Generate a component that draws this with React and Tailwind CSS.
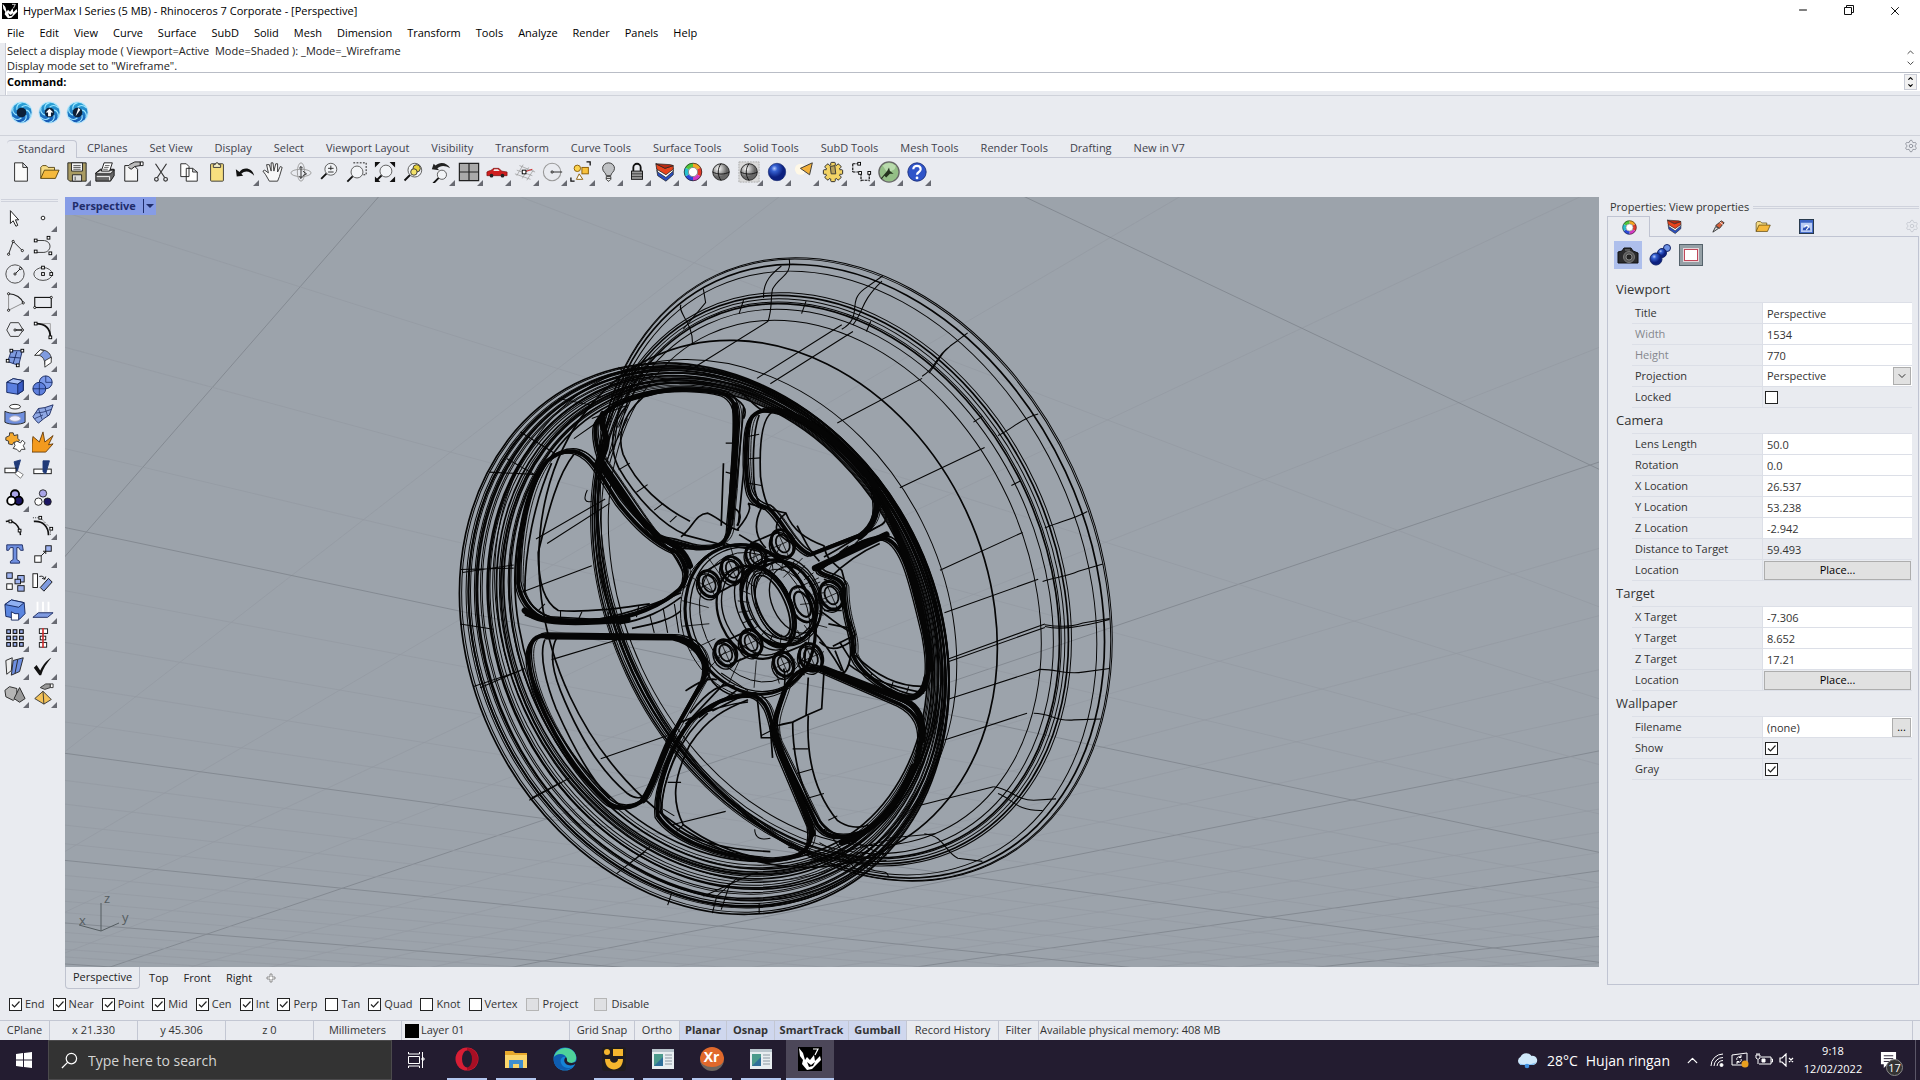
import { ChevronDown, ChevronUp, Minus, Settings, X } from 'lucide-react';

const MENUS = ['File', 'Edit', 'View', 'Curve', 'Surface', 'SubD', 'Solid', 'Mesh', 'Dimension', 'Transform', 'Tools', 'Analyze', 'Render', 'Panels', 'Help'];

const TABS = ['Standard', 'CPlanes', 'Set View', 'Display', 'Select', 'Viewport Layout', 'Visibility', 'Transform', 'Curve Tools', 'Surface Tools', 'Solid Tools', 'SubD Tools', 'Mesh Tools', 'Render Tools', 'Drafting', 'New in V7'];

// icon name, followed by * when the button has a flyout
const TOOLBAR = ['new', 'open', 'save*', 'print', 'props', 'cut', 'copy', 'paste', 'undo*', 'pan', 'rotate', 'zoom', 'zoomWindow', 'zoomExtents', 'zoomSelected', 'undoView*', 'fourView*', 'car*', 'cplane*', 'radius*', 'shapes*', 'bulb*', 'lock*', 'layers*', 'colorWheel*', 'sphere', 'sphereBox*', 'blueSphere*', 'spot*', 'gear*', 'dimension*', 'grasshopper*', 'help*'];

const SIDEBAR = ['pointer', 'point*', 'polyline*', 'curve*', 'circle*', 'ellipse*', 'arc*', 'rectangle*', 'polygon*', 'fillet*', 'patch*', 'sweep*', 'box*', 'spheres*', 'pipe*', 'surface*', 'puzzle', 'explode', 'trim', 'split', 'group*', 'ungroup', 'editCurve', 'offset*', 'text', 'move*', 'copyObj', 'rotateObj', 'boolean*', 'project*', 'array*', 'align*', 'bend*', 'check*', 'solids*', 'drag*'];

const OSNAPS = [
  ['End', true], ['Near', true], ['Point', true], ['Mid', true], ['Cen', true], ['Int', true], ['Perp', true],
  ['Tan', false], ['Quad', true], ['Knot', false], ['Vertex', false],
];

const SECTIONS = [
  {
    title: 'Viewport',
    rows: [
      { label: 'Title', value: 'Perspective' },
      { label: 'Width', value: '1534', muted: true },
      { label: 'Height', value: '770', muted: true },
      { label: 'Projection', value: 'Perspective', type: 'select' },
      { label: 'Locked', type: 'check', checked: false },
    ],
  },
  {
    title: 'Camera',
    rows: [
      { label: 'Lens Length', value: '50.0' },
      { label: 'Rotation', value: '0.0' },
      { label: 'X Location', value: '26.537' },
      { label: 'Y Location', value: '53.238' },
      { label: 'Z Location', value: '-2.942' },
      { label: 'Distance to Target', value: '59.493', readOnly: true },
      { label: 'Location', type: 'button' },
    ],
  },
  {
    title: 'Target',
    rows: [
      { label: 'X Target', value: '-7.306' },
      { label: 'Y Target', value: '8.652' },
      { label: 'Z Target', value: '17.21' },
      { label: 'Location', type: 'button' },
    ],
  },
  {
    title: 'Wallpaper',
    rows: [
      { label: 'Filename', value: '(none)', type: 'file' },
      { label: 'Show', type: 'check', checked: true },
      { label: 'Gray', type: 'check', checked: true },
    ],
  },
];

const sq = (x, y, s = 3) => <rect x={x - s / 2} y={y - s / 2} width={s} height={s} fill="#fff" stroke="#000" strokeWidth="1" />;
const dot = (x, y) => <circle cx={x} cy={y} r="1.2" fill="#fff" stroke="#000" strokeWidth=".9" />;
const lens = (x, y, r) => (
  <>
    <path d={`M${x - r * 0.7} ${y + r * 0.7}L${x - r * 0.7 - 6} ${y + r * 0.7 + 6}`} stroke="#111" strokeWidth="2" />
    <circle cx={x} cy={y} r={r} fill="#f2f4f7" stroke="#555" />
  </>
);

const colorWheel = (
  <g fill="none" strokeWidth="4.5">
    <path d="M12 4.5A7.5 7.5 0 0 1 18.5 8.2" stroke="#f5a623" />
    <path d="M18.5 8.2A7.5 7.5 0 0 1 18.5 15.8" stroke="#e23a2a" />
    <path d="M18.5 15.8A7.5 7.5 0 0 1 12 19.5" stroke="#d43ac2" />
    <path d="M12 19.5A7.5 7.5 0 0 1 5.5 15.8" stroke="#2b49d8" />
    <path d="M5.5 15.8A7.5 7.5 0 0 1 5.5 8.2" stroke="#28c1d0" />
    <path d="M5.5 8.2A7.5 7.5 0 0 1 12 4.5" stroke="#4fc63b" />
    <circle cx="12" cy="12" r="9.6" stroke="#222" strokeWidth=".8" />
    <circle cx="12" cy="12" r="5" stroke="#444" strokeWidth=".6" fill="#fff" />
  </g>
);

const layers = (
  <g stroke="#222" strokeWidth=".8" strokeLinejoin="round">
    <path d="M3 10L13 16L21 10V15L13 22L4 16Z" fill="#2a4fc0" />
    <path d="M3 8L13 14L21 8V11L13 18L4 12Z" fill="#fff" />
    <path d="M2 3L12 8L21 5V9L13 15L3 9Z" fill="#e8441d" />
    <path d="M2 3L12 8L21 5L18 4Z" fill="#b92a12" />
  </g>
);

const folder = (
  <g stroke="#4a3500" strokeWidth=".9" strokeLinejoin="round">
    <path d="M3 19V7L5 5H9L11 7H18V10" fill="#f6dc85" />
    <path d="M3 19L7 10H23L19 19Z" fill="#f5b93c" />
  </g>
);

const TEETH = [0, 45, 90, 135, 180, 225, 270, 315];

const goldGear = (
  <g>
    {TEETH.map((angle) => (
      <rect key={angle} x="9.500" y="1.500" width="5" height="6" rx="1" transform={`rotate(${angle} 12 12)`} fill="#f2d365" stroke="#222" />
    ))}
    <circle cx="12" cy="12" r="7.600" fill="#f2d365" />
    <path d="M9 6L14 5L15 14H10Z" fill="#b8a25a" stroke="#333" />
  </g>
);

const ICONS = {
  new: <path d="M5 2H14L19 7V22H5ZM14 2V7H19" fill="#fafafa" stroke="#222" />,
  open: folder,
  save: (
    <g stroke="#222">
      <path d="M2 2H22V22H4L2 20Z" fill="#a99b62" />
      <path d="M6 2H18V11H6Z" fill="#f4f4f4" />
      <path d="M7 15H17V22H7Z" fill="#ddd" />
      <path d="M10 17V21M8 5H16M8 7H16M8 9H16" strokeWidth=".8" />
    </g>
  ),
  print: (
    <g stroke="#111" strokeLinejoin="round">
      <path d="M2 13L7 9H22L22 16L18 22H2Z" fill="#666" />
      <path d="M2 13L7 10H22L18 14H2Z" fill="#d8d8d8" />
      <path d="M8 11L11 2H20L17 11Z" fill="#fff" />
      <path d="M12 5H17M11 7H16M10 9H15" strokeWidth=".7" />
      <path d="M3 17H17V21" fill="none" stroke="#fff" />
    </g>
  ),
  props: (
    <g stroke="#111">
      <path d="M3 5H13L17 9V22H3Z" fill="#f5f5f5" />
      <path d="M8 4L14 1H20V5L14 6L10 9L7 7" fill="#bbb" />
      <path d="M20 1H23V5H20Z" fill="#fff" />
    </g>
  ),
  cut: (
    <g fill="none" stroke="#333" strokeWidth="1.3">
      <path d="M6 3L16 18M18 3L8 18" />
      <circle cx="7" cy="20" r="2" />
      <circle cx="17" cy="20" r="2" />
    </g>
  ),
  copy: <path d="M3 3H9L12 6V17H3ZM9 8H16L21 12V22H9ZM16 8V12H21" fill="#fff" stroke="#222" />,
  paste: (
    <g stroke="#333">
      <rect x="5" y="3" width="14" height="19" rx="1" fill="#f7df7f" />
      <path d="M8 7V4H10L11 2H13L14 4H16V7Z" fill="#f5efc8" />
    </g>
  ),
  undo: <path d="M2 9L3 17L10 16L8 14C13 9 18 12 22 16C20 7 10 6 6 12Z" fill="#111" />,
  pan: <path d="M8 22L4 15L1 11L3 10L7 13L5 4H8L10 11V2H12L13 11L15 3H17L17 12L20 6L22 7L19 17L17 22Z" fill="#f7f7f7" stroke="#333" strokeLinejoin="round" />,
  rotate: (
    <g fill="none" stroke="#999">
      <ellipse cx="12" cy="13" rx="11" ry="4" />
      <ellipse cx="12" cy="12" rx="4" ry="10" />
      <path d="M12 6V19M10 8L12 6L14 8M10 17L12 19L14 17M14 11L18 14L14 16" stroke="#222" />
    </g>
  ),
  zoom: <>{lens(14, 9, 6.5)}<path d="M14 5V10M11 8H17M11 12H17" stroke="#222" /></>,
  zoomWindow: <>{lens(12, 12, 6.5)}<path d="M8 2H22V15H18" fill="none" stroke="#111" strokeDasharray="2 1.5" /></>,
  zoomExtents: <>{lens(13, 11, 6.5)}<path d="M1 1H7L1 7ZM23 1H17L23 7ZM1 23V17L7 23ZM23 23V17L17 23Z" fill="#111" /></>,
  zoomSelected: <>{lens(14, 10, 7.5)}<circle cx="16" cy="8" r="4" fill="#e8d23a" stroke="#333" /><circle cx="13" cy="12" r="3.5" fill="#f3e26a" stroke="#333" /></>,
  undoView: <>{lens(13, 15, 5)}<path d="M2 9L4 3L6 5C11 0 19 2 22 8C16 4 11 5 8 8L10 10Z" fill="#222" /></>,
  fourView: <path d="M1.500 2.500H22.500V21.500H1.500ZM12 2.500V21.500M1.500 12H22.500" fill="#aaa" stroke="#222" strokeWidth="1.300" />,
  car: (
    <g>
      <path d="M1 12C4 10 6 11 8 8H14L17 11L23 12V16H1Z" fill="#cf1f1f" stroke="#701010" strokeWidth=".7" />
      <path d="M9 9H13L15 11H8Z" fill="#eee" />
      <circle cx="6" cy="16" r="2" fill="#222" />
      <circle cx="18" cy="16" r="2" fill="#222" />
    </g>
  ),
  cplane: (
    <g fill="none" stroke="#999" strokeWidth=".8">
      <path d="M6 5L23 12M3 10L20 16M1 14L18 20M10 4L3 16M16 7L9 19M21 10L14 21" />
      <path d="M11 12L20 9" stroke="#c33" strokeWidth="1.2" />
      {sq(11, 12, 4)}
    </g>
  ),
  radius: <><circle cx="11" cy="12" r="9.5" fill="none" stroke="#999" strokeWidth="1.2" />{dot(11, 12)}<path d="M12 12H22" stroke="#222" /></>,
  shapes: (
    <g stroke="#8a5a00">
      <circle cx="8" cy="8" r="3.500" fill="#fbd34d" />
      <rect x="13" y="7" width="7" height="7" fill="#f9c23c" />
      <path d="M10 14L14 20H7Z" fill="#fff" />
      <path d="M18 1H22V5M1 18V22H5" fill="none" stroke="#111" strokeWidth="1.4" />
    </g>
  ),
  bulb: (
    <g stroke="#333">
      <path d="M9 16C9 13 5 12 5 8A6.500 6 0 0 1 18 8C18 12 14 13 14 16Z" fill="#bfc1c4" />
      <path d="M9 17H14V20L12 22H11L9 20ZM9 19H14" fill="#eee" />
    </g>
  ),
  lock: (
    <g stroke="#111">
      <path d="M8 11V7A4 4 0 0 1 16 7V11" fill="none" strokeWidth="2" />
      <rect x="6" y="11" width="12" height="9" fill="#999" />
      <path d="M6 14H18M6 17H18" strokeWidth=".7" />
    </g>
  ),
  layers,
  colorWheel,
  sphere: <><circle cx="12" cy="12" r="9" fill="url(#steel)" stroke="#222" /><path d="M12 3C8 8 8 16 12 21M3 12C8 15 16 15 21 12" fill="none" stroke="#111" /></>,
  sphereBox: <><rect x="1" y="1" width="22" height="22" fill="#d9d9d9" stroke="#aaa" strokeDasharray="2 1" /><circle cx="12" cy="12" r="9" fill="url(#steel)" stroke="#222" /><path d="M12 3C8 8 8 16 12 21M3 12C8 15 16 15 21 12" fill="none" stroke="#111" /></>,
  blueSphere: <circle cx="12" cy="12" r="9.500" fill="url(#royal)" stroke="#12266e" strokeWidth=".7" />,
  spot: <><circle cx="7" cy="9" r="6" fill="#fff8e6" /><path d="M7 8L20 2L17 15Z" fill="#f3b13b" stroke="#333" /></>,
  gear: goldGear,
  dimension: <g stroke="#111"><path d="M3 3V12M3 3H9M3 12H9M12 13V22M21 13V22M12 21H21" fill="none" strokeDasharray="3 1" strokeWidth="1.300" />{sq(10, 3)}{sq(11, 13)}{sq(21, 13)}</g>,
  grasshopper: (
    <g>
      <circle cx="12" cy="12" r="11" fill="#94bf86" stroke="#666" strokeWidth="1.5" />
      <path d="M5 5A10 10 0 0 1 19 5C20 9 15 12 9 11Z" fill="#b9dbad" />
      <path d="M3 19L10 11L12 7L13 11L17 14L13 14L9 18L7 16L4 20Z" fill="#26331f" />
    </g>
  ),
  help: (
    <g>
      <circle cx="12" cy="12" r="10" fill="#2f54c9" stroke="#1b2f7c" />
      <path d="M8 9C8 4 16 4 16 9C16 12 12 12 12 15" fill="none" stroke="#fff" strokeWidth="2.4" />
      <circle cx="12" cy="18.500" r="1.500" fill="#fff" />
    </g>
  ),
  pointer: <path d="M7 4V18L10 15L13 21L15 20L12.500 14H16Z" fill="#fff" stroke="#111" />,
  point: <circle cx="12" cy="12" r="2" fill="#fff" stroke="#111" />,
  polyline: <g><path d="M5 21L10 7L20 17" fill="none" stroke="#222" />{dot(5, 21)}{dot(10, 7)}{dot(20, 17)}</g>,
  curve: <g><path d="M4 6H12C22 6 22 18 13 19H4" fill="none" stroke="#333" />{sq(4, 6)}{sq(18, 3)}{sq(4, 18)}{sq(20, 20)}</g>,
  circle: <g><circle cx="12" cy="12" r="10" fill="none" stroke="#444" /><path d="M12 12L18 6" stroke="#111" />{dot(12, 12)}{dot(18, 6)}</g>,
  ellipse: <g><ellipse cx="12" cy="12" rx="10" ry="7" fill="none" stroke="#444" />{sq(12, 5)}{sq(12, 12)}{sq(21, 12)}</g>,
  arc: <g><path d="M5 3C13 3 19 8 21 13" fill="none" stroke="#222" strokeWidth="1.300" /><path d="M5 3V21L21 13" fill="none" stroke="#888" />{dot(5, 3)}{dot(21, 13)}{dot(5, 21)}</g>,
  rectangle: <g><rect x="3" y="7" width="18" height="11" fill="none" stroke="#111" strokeWidth="1.2" />{dot(21, 7)}{dot(3, 18)}</g>,
  polygon: <g><path d="M7 4H16L21 12L16 19H7L3 12Z" fill="none" stroke="#333" /><path d="M12 12H19" stroke="#111" strokeWidth="1.500" />{dot(12, 12)}{dot(20, 12)}</g>,
  fillet: <g><path d="M4 5H20V20" fill="none" stroke="#999" /><path d="M4 5C14 5 20 10 20 20" fill="none" stroke="#111" strokeWidth="2" />{sq(4, 5)}{sq(20, 20)}</g>,
  patch: <g><path d="M8 4H20L16 20L4 16Z" fill="#7f9be0" stroke="#1a2a60" /><path d="M14 5L10 18M6 11L18 12" stroke="#1a2a60" />{sq(8, 4)}{sq(20, 4)}{sq(4, 15)}{sq(15, 20)}</g>,
  sweep: <g stroke="#333"><path d="M3 9L9 3C17 3 21 8 21 13L14 19C14 12 10 8 3 9Z" fill="#7f9be0" /><path d="M3 9L9 3L13 4L8 9ZM14 15L21 11V17L14 22Z" fill="#fff" /></g>,
  box: <g stroke="#12245c" strokeLinejoin="round"><path d="M3 8L10 4L21 6V17L15 21L3 19Z" fill="#5b7fe0" /><path d="M3 8L10 4L21 6L15 10Z" fill="#a9bff5" /><path d="M15 10V21L21 17V6Z" fill="#3a5bc4" /></g>,
  spheres: <g stroke="#12245c"><circle cx="15" cy="8" r="7" fill="#7c9aea" /><circle cx="8" cy="15" r="7" fill="#5f80dd" /><path d="M8 9V22M1 15H15M15 1V8M15 8H22" strokeWidth=".8" /></g>,
  pipe: <g stroke="#222"><ellipse cx="12" cy="4" rx="6" ry="2.500" fill="#fff" /><path d="M1 9C6 12 18 12 23 9V21C18 24 6 24 1 21Z" fill="#6f8fdf" /><ellipse cx="12" cy="17" rx="6" ry="3" fill="#eef" stroke="#aab" /></g>,
  surface: <g stroke="#1a2a60"><path d="M1 15L7 6L14 5L23 2L19 13L13 17L7 22L4 19Z" fill="#8fa8e4" /><path d="M7 6L11 18M14 5L17 14M4 11L12 10L21 7M3 17L12 13" strokeWidth=".8" fill="none" /></g>,
  puzzle: (
    <g stroke="#333">
      <path d="M2 7L6 5L6 2L10 2L11 5L15 4L15 8L17 10L14 13L11 12L9 15L5 14L5 11L2 10Z" fill="#f5a92e" />
      <path d="M11 13L14 11L18 13L20 10L23 13L21 16L23 20L19 20L17 23L14 20L10 19L12 16Z" fill="#fff" />
    </g>
  ),
  explode: <path d="M0 23V15L1 6L8 12L12 1L14 12L23 5L18 15L23 14L15 23Z" fill="#f39a1e" stroke="#5a3000" strokeWidth=".9" />,
  trim: <g stroke="#111"><path d="M11 3L18 1L14 15Z" fill="#203a78" stroke="#203a78" /><rect x="1" y="10" width="12" height="5" fill="#fff" /><path d="M15 13L21 17L18 21L12 16Z" fill="#fff" stroke="#777" /></g>,
  split: <g stroke="#111"><rect x="2" y="11" width="19" height="5" fill="#fff" /><path d="M12 2H19L15 16L12 14Z" fill="#203a78" stroke="#203a78" /></g>,
  group: <g stroke="#000" strokeWidth="2"><circle cx="12" cy="8" r="4.500" fill="#a9a4e8" /><circle cx="16" cy="15" r="4.500" fill="#1c1663" /><circle cx="8" cy="15" r="4.500" fill="#fff" /></g>,
  ungroup: <g stroke="#222"><circle cx="12" cy="7" r="4" fill="#a9a4e8" /><circle cx="17" cy="16" r="4" fill="#1c1663" /><circle cx="7" cy="16" r="4" fill="#fff" /></g>,
  editCurve: <g><path d="M2 7C10 5 17 11 18 22" fill="none" stroke="#111" strokeWidth="1.600" />{sq(7, 7)}{sq(17, 17)}</g>,
  offset: <g><path d="M2 7C12 6 18 13 18 22" fill="none" stroke="#111" strokeWidth="1.800" /><path d="M1 3H9L20 14V22" fill="none" stroke="#111" strokeDasharray="1 1.500" />{sq(9, 3)}{sq(21, 15)}</g>,
  text: <path d="M3 2H20L21 8H18L16 5H14V18L17 20V22H7V20L10 18V5H7L5 8H3Z" fill="#6f8fe0" stroke="#1a2a60" />,
  move: <g stroke="#111"><rect x="3" y="14" width="7" height="7" fill="#fff" /><rect x="15" y="3" width="6" height="6" fill="#9db2f0" /><path d="M10 14L15 9M12 9H15V12" fill="none" /></g>,
  copyObj: <g stroke="#111"><rect x="3" y="2" width="6" height="6" fill="#9db2f0" /><rect x="15" y="5" width="7" height="7" fill="#9db2f0" /><rect x="12" y="9" width="6" height="5" fill="#9db2f0" /><rect x="3" y="14" width="6" height="6" fill="#fff" /><rect x="15" y="16" width="7" height="6" fill="#9db2f0" /></g>,
  rotateObj: <g stroke="#111"><rect x="1" y="3" width="5" height="15" fill="#fff" /><path d="M9 18L18 8L22 12L13 22Z" fill="#7f9be0" /><path d="M8 6C11 5 13 6 14 9M11 8L14 9L15 6" fill="none" /></g>,
  boolean: <g stroke="#12245c" strokeLinejoin="round"><path d="M1 6L8 1L22 4L23 16L17 22L2 19Z" fill="#5b86e0" /><path d="M1 6L8 1L22 4L16 9Z" fill="#8fb0f2" /><path d="M8 14L12 16H16V23H8Z" fill="#fff" /></g>,
  project: <g><path d="M6 3V14M12 3V14M18 3V14" stroke="#fff" strokeWidth="2" /><path d="M1 20L7 15H23L17 20Z" fill="#7f9be0" stroke="#1a2a60" /></g>,
  array: <g fill="#9db2f0" stroke="#111" strokeWidth="1.200">{[3, 10, 17].map((y) => [3, 10, 17].map((x) => <rect key={`${x}-${y}`} x={x} y={y} width="4" height="4" />))}</g>,
  align: <g stroke="#111"><rect x="8" y="2" width="9" height="5" fill="#fff" /><rect x="9" y="10" width="6" height="4" fill="#fff" /><rect x="8" y="17" width="8" height="5" fill="#fff" /><path d="M12 1V23" stroke="#d03030" strokeWidth="1.800" /></g>,
  bend: <g stroke="#222"><path d="M2 6L9 3L8 17L3 21Z" fill="#eee" /><path d="M10 6L21 3L17 18L8 22Z" fill="#6f8fe0" /><path d="M15 5L12 20" /></g>,
  check: <path d="M2 14L5 11L9 17C12 10 17 5 21 3C16 9 12 15 10 22H8Z" fill="#111" />,
  solids: <g stroke="#222"><path d="M1 8L6 4L14 6V15L10 19L2 15Z" fill="#b5b5b5" /><path d="M17 5L23 17L17 21L11 17Z" fill="#999" /></g>,
  drag: <g stroke="#333"><path d="M12 9L21 18L13 23L3 17Z" fill="#f2c25a" /><path d="M12 9L13 23" /><path d="M9 5L15 1H20V5L14 7Z" fill="#999" /><path d="M20 1H23V5H20Z" fill="#fff" /></g>,
};

function Icon({ name, size = 'h-[22px] w-[22px]' }) {
  return (
    <svg viewBox="0 0 24 24" className={`${size} shrink-0`} aria-hidden="true">
      {ICONS[name]}
    </svg>
  );
}

function ToolButton({ item }) {
  const name = item.replace('*', '');
  return (
    <button type="button" title={name} className="relative flex h-7 w-7 items-center justify-center">
      <Icon name={name} />
      {item.endsWith('*') ? (
        <span className="absolute right-0 bottom-0 border-b-6 border-l-6 border-b-[#686a72] border-l-transparent" />
      ) : null}
    </button>
  );
}

function RhinoMark({ className }) {
  return (
    <svg viewBox="0 0 24 24" className={className} aria-hidden="true">
      <rect width="24" height="24" fill="#000" />
      <path d="M1 1L2 9L5 13L4 17L9 23L14 22L23 13L22 9L17 14L16 8L12 13L9 10L7 13L5 6Z" fill="#fff" />
      <path d="M9 15L13 18L17 15L15 19L11 20Z" fill="#000" />
      <path d="M15 2H20L17 8" fill="none" stroke="#fff" strokeWidth="1.200" />
    </svg>
  );
}

function TitleBar() {
  return (
    <header className="flex h-[22px] items-center bg-white pl-[2px] text-black">
      <RhinoMark className="h-4 w-4" />
      <h1 className="ml-[5px] text-[11px]">HyperMax I Series (5 MB) - Rhinoceros 7 Corporate - [Perspective]</h1>
      <div className="mr-[2px] ml-auto flex">
        <button type="button" aria-label="Minimize" className="flex w-[46px] justify-center"><Minus className="h-3 w-3" strokeWidth={2} /></button>
        <button type="button" aria-label="Restore" className="flex w-[46px] justify-center">
          <svg viewBox="0 0 12 12" className="h-3 w-3" fill="none" stroke="#111">
            <path d="M1.500 3.500H8.500V10.500H1.500ZM3.500 3.500V1.500H10.500V8.500H8.500" />
          </svg>
        </button>
        <button type="button" aria-label="Close" className="flex w-[46px] justify-center"><X className="h-[14px] w-[14px]" strokeWidth={1.6} /></button>
      </div>
    </header>
  );
}

function CommandArea() {
  return (
    <section className="flex h-[52px] bg-white">
      <div className="mr-px w-[6px] border-r border-[#c9ccd6] bg-[#e9ebf0]" />
      <div className="flex flex-1 flex-col">
        <div className="relative flex h-[30px] flex-col border-b border-[#b9bdc6] text-[11px] leading-[15px] text-[#222]">
          <span className="whitespace-pre">Select a display mode ( Viewport=Active  Mode=Shaded ): _Mode=_Wireframe</span>
          <span>Display mode set to "Wireframe".</span>
          <div className="absolute top-0 right-1 flex h-full flex-col justify-between py-1 text-[#333]">
            <ChevronUp className="h-[11px] w-[11px]" />
            <ChevronDown className="h-[11px] w-[11px]" />
          </div>
        </div>
        <div className="flex h-[18px] items-center text-[11px]">
          <label htmlFor="command" className="font-bold text-black">Command:</label>
          <input id="command" className="ml-1 min-w-0 flex-1 outline-none" />
          <div className="mr-[3px] flex flex-col border border-[#c9ccd6] bg-[#f1f1f1] text-black">
            <ChevronUp className="h-[7px] w-[11px]" strokeWidth={4} />
            <ChevronDown className="h-[7px] w-[11px]" strokeWidth={4} />
          </div>
        </div>
        <div className="h-1 bg-[#e9ebf0]" />
      </div>
    </section>
  );
}

function SwirlIcon({ children }) {
  return (
    <svg viewBox="0 0 24 24" className="h-[23px] w-[23px]" aria-hidden="true">
      <circle cx="12" cy="12" r="11.500" fill="#b8e6fb" />
      <circle cx="12" cy="12" r="10.500" fill="url(#swirl)" />
      {[0, 60, 120, 180, 240, 300].map((angle) => (
        <path key={angle} d="M12 6.500C15 4 18 4 21 7" transform={`rotate(${angle} 12 12)`} fill="none" stroke="#9be6ff" strokeWidth="1.200" />
      ))}
      <circle cx="12" cy="12" r="5" fill="#0d2038" />
      {children}
    </svg>
  );
}

function PluginBar() {
  return (
    <div className="flex h-10 items-center gap-[5px] border-t border-[#cfd2da] pb-[6px] pl-[10px]">
      <button type="button" title="Status"><SwirlIcon /></button>
      <button type="button" title="Update"><SwirlIcon><path d="M12 8L16 12H13.500V16H10.500V12H8Z" fill="#fff" /></SwirlIcon></button>
      <button type="button" title="Gauge"><SwirlIcon><path d="M10 16L13 7L15 9Z" fill="#fff" /></SwirlIcon></button>
    </div>
  );
}

function TabBar() {
  return (
    <section className="h-[62px] border-t border-[#cfd2da] pl-[7px]">
      <div className="flex h-[22px] items-end border-b border-[#c3c6d2] text-[11px] text-[#3f424c]">
        {TABS.map((tab, i) => (
          <button
            key={tab}
            type="button"
            className={`h-[18px] px-[11px] whitespace-nowrap ${i === 0 ? 'relative top-px -mr-px rounded-t border-t border-r border-[#c3c6d2] bg-[#e9ebf0]' : ''}`}
          >
            {tab}
          </button>
        ))}
        <Settings className="mr-[2px] mb-1 ml-auto h-[14px] w-[14px] text-[#8c8f99]" strokeWidth={1.5} />
      </div>
      <div className="flex">
        {TOOLBAR.map((item) => <ToolButton key={item} item={item} />)}
      </div>
    </section>
  );
}

// Ground plane seen in two point perspective: every line of a family runs to one vanishing point.
const HORIZON = 964;

function gridFamily(vx, step, first, count, direction) {
  return Array.from({ length: count }, (_, i) => {
    const offset = first + i * step;
    const run = 14;
    return { x1: vx, y1: HORIZON, x2: vx + direction * offset * run, y2: HORIZON - 195 * run, major: i % 5 === 0 };
  });
}

const GRID = [...gridFamily(-527, 81, 170, 60, 1), ...gridFamily(2992, 102, 411, 60, -1)];

const lerp = (a, b, t) => a + (b - a) * t;

function rings(from, to, stops) {
  return stops.map((t) => from.map((v, i) => lerp(v, to[i], t)));
}

// cx, cy, rx, ry, rotation
const RINGS = [
  ...rings([592, 893, 640, 522, 63], [630, 862, 552, 436, 63], [0, 0.04, 0.12, 0.16, 0.2, 0.27, 0.3, 0.38, 0.41, 0.5, 0.55, 0.6, 0.67, 0.72, 0.77, 0.8, 0.88, 0.93, 1]),
  ...rings([927, 738, 728, 541, 65], [915, 746, 706, 518, 65], [0, 0.1, 0.5, 1]),
  ...rings([876, 760, 668, 506, 65], [862, 768, 614, 452, 65], [0, 0.1, 0.22, 0.34, 0.4, 0.6, 1]),
  [735, 815, 610, 490, 65],
  [640, 852, 606, 492, 63],
];

const BOLD_RINGS = [
  [636, 864, 566, 456, 63],
  [630, 866, 576, 470, 63],
  [620, 876, 600, 486, 63],
  [612, 884, 618, 502, 63],
  [602, 888, 628, 512, 63],
];

const WINDOWS = [
  'M470 345C520 330 600 335 635 345C660 355 668 380 665 420L655 560L648 635C650 680 620 692 580 690C540 685 520 670 490 672C470 655 430 590 370 505C350 480 345 430 350 410C365 380 410 358 470 345Z',
  'M740 382C810 385 950 490 972 560C982 610 975 640 940 662L830 705C790 690 770 630 735 600C690 590 688 560 685 500C685 440 688 410 700 395C710 385 725 380 740 382Z',
  'M990 668C1040 668 1060 780 1085 880C1100 960 1095 1005 1062 1025C1010 1022 940 970 925 930C930 880 905 860 905 780C900 750 850 755 848 738C900 700 940 670 990 668Z',
  'M850 962L1030 1040C1070 1060 1080 1090 1075 1130C1065 1220 1010 1290 950 1325C900 1345 865 1340 845 1310L755 1125C740 1080 760 1050 775 1000C800 960 820 955 850 962Z',
  'M700 1020C745 1035 740 1090 760 1150L828 1310C838 1370 810 1385 740 1390C620 1385 520 1340 488 1290C480 1230 520 1130 560 1080C600 1040 650 1020 700 1020Z',
  'M230 886L520 890C580 892 605 940 590 985L520 1110L460 1250C430 1280 390 1275 370 1255C290 1180 210 1040 200 950C195 910 205 890 230 886Z',
  'M300 474C340 480 360 530 400 590C440 640 480 680 530 700C555 730 560 770 525 792C480 830 400 855 330 855L240 850C200 840 180 800 175 770C175 680 190 560 240 495C260 477 280 472 300 474Z',
];

// the stretches where the spoke fillets bunch up into solid black
const HEAVY_EDGES = [
  'M660 370C668 420 655 520 652 620M355 500C400 560 440 620 490 665C530 680 550 700 560 730',
  'M770 385C850 410 950 500 985 570C1040 680 1080 800 1100 960M840 735L1000 660M975 560C985 600 975 640 940 665',
  'M860 960L1040 1030C1070 1045 1085 1070 1080 1120M1090 980C1085 1010 1070 1025 1050 1025',
  'M745 1090C770 1180 810 1250 835 1330M1060 1180C1030 1260 970 1330 900 1350M520 1110C490 1170 480 1220 455 1255',
  'M240 888L520 890C570 900 600 940 595 970M190 830C220 860 300 860 420 850M350 505C400 440 350 420 365 390',
];

const INNER_EDGES = [
  'M455 352C400 400 400 450 410 480C440 550 500 600 560 630M420 370C380 410 380 470 400 510C440 580 500 640 550 660',
  'M745 385C720 400 715 460 718 530C722 560 730 590 740 605M715 392C700 430 700 510 705 560C710 580 715 595 720 600M975 560C1000 600 1010 630 985 640C940 660 900 690 860 710',
  'M985 680C940 700 900 730 870 760M1080 1000C1020 1000 970 970 930 930M1085 1015C1010 1000 950 980 915 950',
  'M825 1065C820 1160 840 1240 890 1300C910 1315 940 1320 960 1310M790 1080C790 1160 810 1240 850 1300C880 1335 900 1340 930 1335',
  'M690 1030C640 1050 600 1070 560 1130C520 1210 520 1260 545 1310C600 1350 660 1375 720 1385M600 1060C540 1110 500 1200 495 1280C530 1340 620 1365 740 1370',
  'M262 890C245 920 250 960 270 1010C310 1110 360 1190 420 1240C440 1255 455 1250 460 1240M235 895C220 930 240 1000 260 1050C300 1140 340 1210 380 1250',
  'M300 480C260 530 240 620 220 700C220 760 230 810 265 830C330 835 400 825 470 815M250 500C210 590 190 700 190 790C200 820 230 845 270 850M350 540C340 640 350 740 380 830C420 960 480 1080 560 1170C640 1260 740 1340 820 1370',
  'M480 660C500 680 520 690 545 745M520 690C560 720 560 750 545 780M190 840C260 870 380 860 540 790M400 860C460 850 500 830 540 800M430 870C480 860 520 850 540 830',
  'M540 665C570 640 570 615 600 612C630 625 650 650 670 650M530 690C580 695 620 690 640 680M545 660L640 685',
  'M690 590C730 600 745 605 775 612C790 650 820 670 860 685C865 710 870 715 900 740L908 770L895 790C900 830 930 870 930 885C920 900 925 950 905 970L860 962M880 910L930 885M870 860L920 870M885 920L905 970M895 900L920 940M860 830L900 830',
  'M860 970L855 1050L820 1065L790 1080L765 1085M825 980L820 1065M770 960C780 1000 760 1050 750 1090M745 1090L790 1080M710 1020L720 1115L745 1115M740 1090L745 1160',
  'M600 970C610 1000 650 1030 690 1020M560 1060C600 1010 630 990 660 1000M540 1080C590 1060 630 1040 690 1035M550 1010C580 990 600 980 620 985M530 1090L600 980M550 1085L640 990M580 1070L670 1005M610 1055L690 1015',
  'M680 375C675 440 665 540 655 640M640 345C680 360 690 380 680 400M670 340C690 350 700 370 720 380M635 500L630 640M690 420L668 640',
  'M665 650C690 620 700 600 690 590M670 660C720 690 740 700 760 720M640 680C660 690 700 690 720 700M720 600C700 640 710 670 730 690M775 612C740 640 750 660 790 680M800 640C820 680 830 700 850 720M650 600C670 600 680 620 665 640',
  'M860 760C890 770 900 780 905 800M850 830C880 850 900 870 925 880M830 870C860 900 880 930 900 965M850 900C870 920 890 920 920 900M820 900L815 975M810 940C840 960 860 950 870 970',
];

const RIBS = [
  'M735 182L570 285M900 190L710 310M925 205L740 322M1080 310L890 410M1220 465L1030 555M1305 655L1120 740M1340 760L1130 835',
  'M1355 860L1140 938M1355 868L1140 944M1345 962L1140 1028M1315 1060L1130 1120M1240 1225L1060 1270M1110 1330L1000 1340',
  'M1355 862C1390 868 1420 865 1440 858L1500 848M1355 866C1390 874 1430 868 1500 850M1355 645C1390 630 1420 625 1450 608M1250 438C1280 425 1300 400 1340 390',
  'M1080 305C1110 290 1110 260 1140 240L1182 208M1095 298C1120 270 1120 250 1160 225M900 200C950 170 910 140 950 110L992 80M925 190C950 160 940 140 990 92',
  'M735 182C745 150 740 130 745 110C760 80 790 80 782 42M725 130C722 90 750 70 765 58M565 235C570 190 530 160 540 145M590 110L595 140L545 200',
  'M1350 765C1380 755 1400 755 1430 742L1485 726M1340 962C1380 960 1400 975 1440 968L1500 960M1330 1060C1370 1060 1380 1080 1420 1075L1480 1073M1240 1225C1280 1230 1290 1255 1330 1255L1380 1252M1250 1240C1280 1250 1290 1280 1350 1278',
  'M1085 1330C1130 1335 1130 1370 1160 1385L1215 1392M945 1400C980 1425 1000 1405 1005 1427M820 137L810 165M965 182L955 205M680 135L670 165M1215 395L1195 408M1300 540L1280 550',
  'M215 670L370 580M240 680L380 590M180 790L340 730M250 940L400 895M360 1162L510 1110M520 1310L640 1280M330 560C320 580 325 590 340 585M705 1320C705 1340 720 1345 740 1340',
  'M45 738L165 735M50 745L165 728M45 860L120 872M75 1000L180 965M90 1003L190 960M200 1255L290 1205M205 1250L270 1215M395 1420L470 1360M420 1400L460 1370M610 1508L620 1470L665 1430M715 1508L715 1485M510 1490L520 1460',
  'M110 520L210 525M150 490L220 530M180 430L260 480M265 355L340 370M400 285L440 320M340 400L420 370M300 445L350 410M630 1500L650 1440M590 1470L700 1420M840 1370L950 1390M850 1350L940 1400M880 1340L930 1410M800 1400L960 1370',
  'M420 290L400 380L390 470M440 280L410 400L380 500M460 285L400 420M420 400L350 540M480 300L380 360M820 1370C860 1390 900 1400 1000 1390M780 1360L960 1400M860 1320L1000 1380M830 1390L1020 1340',
];

const TICKS = [
  'M400 515L425 500M440 565L465 548M480 605L500 590M515 632L530 618M690 440L715 435M690 490L718 488M692 545L720 550M895 700L915 685M930 680L945 665M960 655L985 640',
  'M960 985L968 970M1010 1005L1015 990M1045 1015L1050 1000M790 1140L825 1140M800 1195L835 1185M825 1250L860 1240M870 1300L890 1290M510 1215L540 1215M500 1275L525 1290M530 1325L545 1310',
  'M220 830L235 815M270 850L270 830M310 850L318 833M375 850L380 825M440 845L445 820M470 840L480 880M500 825L510 880M525 815L535 880M630 970L690 1010M720 1110L750 1095M640 455L660 455M640 520L660 525',
];

const LUGS = [[603, 770, 30], [655, 738, 30], [708, 708, 28], [768, 680, 32], [877, 796, 32], [640, 925, 30], [697, 902, 30], [770, 950, 28], [831, 935, 32]];

// cx, cy, rx, ry, stroke width
const HUB_RINGS = [
  [744, 820, 74, 30, 4], [744, 820, 80, 36, 3], [742, 820, 90, 46, 3], [735, 822, 96, 52, 6], [728, 824, 100, 60, 3],
  [760, 812, 98, 82, 7], [765, 808, 104, 88, 3], [765, 808, 88, 76, 3], [712, 830, 104, 76, 3], [705, 834, 108, 80, 5],
  [695, 850, 172, 140, 7], [700, 850, 166, 134, 3], [705, 845, 150, 118, 2], [690, 855, 176, 146, 2], [812, 816, 42, 26, 6], [812, 816, 30, 16, 5],
  [780, 806, 90, 70, 3], [795, 806, 78, 52, 3], [770, 818, 84, 60, 2],
];

function Wheel() {
  return (
    <g transform="translate(375 43) scale(.4464)" fill="none" stroke="#050505" strokeWidth="2">
      {RINGS.map(([cx, cy, rx, ry, rot], i) => (
        <ellipse key={i} cx={cx} cy={cy} rx={rx} ry={ry} transform={`rotate(${rot} ${cx} ${cy})`} strokeWidth={i % 3 === 0 ? 3.8 : 2.2} />
      ))}
      {BOLD_RINGS.map(([cx, cy, rx, ry, rot], i) => (
        <ellipse key={i} cx={cx} cy={cy} rx={rx} ry={ry} transform={`rotate(${rot} ${cx} ${cy})`} strokeWidth="4" />
      ))}
      {WINDOWS.map((d) => (
        <g key={d} strokeLinejoin="round">
          <path d={d} strokeWidth="9" />
          <path d={d} transform="translate(6 -6)" strokeWidth="3" />
          <path d={d} transform="translate(-6 4)" strokeWidth="3" />
          <path d={d} transform="translate(11 -3)" strokeWidth="2" />
        </g>
      ))}
      {HEAVY_EDGES.map((d) => <path key={d} d={d} strokeWidth="14" strokeLinecap="round" />)}
      {INNER_EDGES.map((d) => <path key={d} d={d} strokeWidth="3.800" />)}
      {RIBS.map((d) => <path key={d} d={d} strokeWidth="2.400" />)}
      {TICKS.map((d) => <path key={d} d={d} strokeWidth="2.400" />)}
      {HUB_RINGS.map(([cx, cy, rx, ry, w], i) => (
        <ellipse key={i} cx={cx} cy={cy} rx={rx} ry={ry} transform={`rotate(66 ${cx} ${cy})`} strokeWidth={w} />
      ))}
      {Array.from({ length: 18 }, (_, i) => (
        <path key={i} d="M104 0L165 8" transform={`translate(705 838) rotate(${i * 20 + 8}) scale(1 .9)`} strokeWidth="1.800" />
      ))}
      {Array.from({ length: 24 }, (_, i) => (
        <path key={i} d="M72 0L98 4" transform={`translate(765 812) rotate(${i * 15}) scale(1 .9)`} strokeWidth="2" />
      ))}
      {LUGS.map(([cx, cy, r]) => (
        <g key={`${cx}-${cy}`} transform={`rotate(66 ${cx} ${cy})`}>
          <ellipse cx={cx} cy={cy} rx={r} ry={r * 0.78} strokeWidth="7" />
          <ellipse cx={cx} cy={cy} rx={r * 0.65} ry={r * 0.45} strokeWidth="4" />
          <ellipse cx={cx + 5} cy={cy + 6} rx={r} ry={r * 0.8} strokeWidth="3" />
          <path d={`M${cx - r} ${cy}H${cx + r}M${cx} ${cy - r}V${cy + r}`} strokeWidth="1.600" />
        </g>
      ))}
      <path d="M590 745L650 710M615 795L670 765M695 680L760 652M715 735L780 710M625 905L690 875M650 950L710 925M760 930L820 905M780 975L850 960" strokeWidth="4" />
    </g>
  );
}

function Viewport() {
  return (
    <div className="relative min-h-0 flex-1 overflow-hidden bg-[#9ca3ab]">
      <svg viewBox="0 0 1534 770" preserveAspectRatio="xMinYMin slice" className="absolute inset-0 h-full w-full" role="img" aria-label="Wireframe of a seven spoke wheel">
        {GRID.map((line, i) => (
          <line key={i} x1={line.x1} y1={line.y1} x2={line.x2} y2={line.y2} stroke={line.major ? '#848a92' : '#939aa2'} strokeWidth={line.major ? 1 : 0.7} />
        ))}
        <Wheel />
        <g stroke="#555d61" fill="none">
          <path d="M36 706V734L14 728M36 734L54 726" />
        </g>
        <g fill="#555d61" className="font-['Open_Sans',sans-serif] text-[13px]">
          <text x="39" y="706">z</text>
          <text x="14" y="728">x</text>
          <text x="57" y="725">y</text>
        </g>
      </svg>
      <button type="button" className="absolute top-0 left-0 flex h-[18px] items-center bg-[#869ce6] pl-[7px] text-[11px] font-bold text-[#1f2c6b]">
        Perspective
        <span className="ml-[7px] h-[14px] border-l border-[#1f2c6b]" />
        <span className="mx-[2px] border-x-4 border-t-4 border-x-transparent border-t-[#1f2c6b]" />
      </button>
    </div>
  );
}

function ViewTabs() {
  return (
    <div className="flex h-[22px] items-start text-[11px] text-[#222]">
      <button type="button" className="h-[22px] rounded-b border border-t-0 border-[#bfc3cf] px-[7px]">Perspective</button>
      <button type="button" className="h-[22px] px-[9px]">Top</button>
      <button type="button" className="h-[22px] px-[6px]">Front</button>
      <button type="button" className="h-[22px] px-[9px]">Right</button>
      <button type="button" aria-label="New layout" className="flex h-[22px] items-center px-[5px]">
        <svg viewBox="0 0 10 10" className="h-[10px] w-[10px]"><path d="M4 1H6V4H9V6H6V9H4V6H1V4H4Z" fill="#fff" stroke="#777" strokeWidth=".8" /></svg>
      </button>
    </div>
  );
}

function Checkbox({ id, checked, disabled }) {
  return (
    <span className="relative inline-flex">
      <input
        id={id}
        type="checkbox"
        defaultChecked={checked}
        disabled={disabled}
        className="peer h-[13px] w-[13px] appearance-none border border-[#222] bg-white disabled:border-[#b5b5b5] disabled:bg-[#dfe0e3]"
      />
      <svg viewBox="0 0 13 13" className="pointer-events-none absolute inset-0 hidden h-[13px] w-[13px] peer-checked:block" fill="none" stroke="#222" strokeWidth="1.200">
        <path d="M3 6.500L5.500 9L10.500 3.500" />
      </svg>
    </span>
  );
}

function OsnapBar() {
  return (
    <div className="flex h-[31px] items-center gap-2 pl-[9px] text-[11px] text-[#333]">
      {OSNAPS.map(([label, checked]) => (
        <div key={label} className="flex items-center gap-[3px]">
          <Checkbox id={`osnap-${label}`} checked={checked} />
          <label htmlFor={`osnap-${label}`}>{label}</label>
        </div>
      ))}
      {['Project', 'Disable'].map((label) => (
        <div key={label} className="mr-2 flex items-center gap-1">
          <Checkbox id={`osnap-${label}`} disabled />
          <label htmlFor={`osnap-${label}`}>{label}</label>
        </div>
      ))}
    </div>
  );
}

function StatusBar() {
  const cell = 'flex h-full items-center justify-center border-r border-[#c3c7d3] whitespace-nowrap';
  const on = 'bg-[#cfd7ee] font-bold';
  return (
    <footer className="flex h-5 border-t border-[#c3c7d3] text-[11px] text-[#333]">
      <button type="button" className={`${cell} w-[50px]`}>CPlane</button>
      <div className={`${cell} w-[88px]`}>x 21.330</div>
      <div className={`${cell} w-[88px]`}>y 45.306</div>
      <div className={`${cell} w-[88px]`}>z 0</div>
      <div className={`${cell} w-[88px]`}>Millimeters</div>
      <button type="button" className="flex h-full w-[168px] items-center gap-[2px] border-r border-[#c3c7d3] pl-[3px]">
        <span className="h-[14px] w-[14px] bg-black" />
        Layer 01
      </button>
      <button type="button" className={`${cell} w-[65px]`}>Grid Snap</button>
      <button type="button" className={`${cell} w-[45px]`}>Ortho</button>
      <button type="button" className={`${cell} ${on} w-[47px]`}>Planar</button>
      <button type="button" className={`${cell} ${on} w-[48px]`}>Osnap</button>
      <button type="button" className={`${cell} ${on} w-[74px]`}>SmartTrack</button>
      <button type="button" className={`${cell} ${on} w-[58px]`}>Gumball</button>
      <button type="button" className={`${cell} w-[92px]`}>Record History</button>
      <button type="button" className={`${cell} w-[40px]`}>Filter</button>
      <div className="flex flex-1 items-center border-r border-[#c3c7d3] pl-px whitespace-nowrap">Available physical memory: 408 MB</div>
      <div className="w-[7px]" />
    </footer>
  );
}

function PropertyValue({ row, id }) {
  const field = 'h-5 w-full min-w-0 pl-1 text-[#333] outline-none';
  if (row.type === 'check') return <Checkbox id={id} checked={row.checked} />;
  if (row.type === 'button') {
    return <button id={id} type="button" className="h-[19px] w-full border border-[#adadad] bg-[#e1e1e1] text-black">Place...</button>;
  }
  if (row.type === 'select') {
    return (
      <div className="relative flex flex-1 bg-white">
        <select id={id} defaultValue={row.value} className={`${field} appearance-none`}>
          <option>{row.value}</option>
        </select>
        <span className="pointer-events-none absolute top-px right-px flex h-[18px] w-[18px] items-center justify-center border border-[#adadad] bg-[#e1e1e1]">
          <ChevronDown className="h-3 w-3 text-[#333]" />
        </span>
      </div>
    );
  }
  if (row.type === 'file') {
    return (
      <div className="flex flex-1 items-center bg-white">
        <input id={id} defaultValue={row.value} className={field} />
        <button type="button" aria-label="Browse" className="mr-px flex h-[19px] w-[19px] shrink-0 items-center justify-center border border-[#adadad] bg-[#e1e1e1] text-black">...</button>
      </div>
    );
  }
  return <input id={id} defaultValue={row.value} readOnly={row.readOnly} className={`${field} ${row.readOnly ? '' : 'bg-white'}`} />;
}

function PropertiesPanel() {
  return (
    <aside className="flex w-[321px] shrink-0 flex-col pr-px pl-2 text-[11px] text-[#333]">
      <div className="mt-[2px] flex h-[17px] items-center gap-1 pl-[3px]">
        <h2>Properties: View properties</h2>
        <span className="h-[3px] flex-1 border-y border-[#cfd2dc]" />
      </div>
      <div className="flex h-[21px] items-center">
        <button type="button" title="Properties" className="flex h-[21px] w-[43px] items-center justify-center border-t border-r border-l border-[#c0c4d2] pl-[2px]">
          <Icon name="colorWheel" size="h-[17px] w-[17px]" />
        </button>
        <div className="flex h-[21px] flex-1 items-center border-b border-[#c0c4d2] pl-[2px]">
          <button type="button" title="Layers" className="flex w-11 justify-center"><Icon name="layers" size="h-[17px] w-[17px]" /></button>
          <button type="button" title="Materials" className="flex w-11 justify-center">
            <svg viewBox="0 0 16 16" className="h-[15px] w-[15px]" stroke="#333">
              <path d="M2 14L5 8L8 10Z" fill="#ddd" />
              <path d="M5 7L11 2L14 4L9 10Z" fill="#d5603a" />
              <path d="M9 3L13 6" stroke="#eee" />
            </svg>
          </button>
          <button type="button" title="Libraries" className="flex w-11 justify-center"><Icon name="open" size="h-[17px] w-[17px]" /></button>
          <button type="button" title="Help" className="flex w-11 justify-center">
            <svg viewBox="0 0 16 16" className="h-[15px] w-[15px]">
              <rect x=".5" y=".5" width="15" height="15" fill="#3b63c4" stroke="#234" />
              <rect x="2" y="4" width="12" height="10" fill="#b9cbf4" />
              <path d="M4 12A4 4 0 1 1 12 12Z" fill="#2d50b5" />
              <path d="M6 9C6 6 10 6 10 8.500C10 10 8 10 8 12" fill="none" stroke="#fff" strokeWidth="1.300" />
            </svg>
          </button>
          <Settings className="ml-auto h-[14px] w-[14px] text-[#c5c8d0]" strokeWidth={1.5} />
        </div>
      </div>
      <div className="mb-1 flex-1 border-r border-b border-l border-[#c0c4d2]">
        <div className="flex h-[35px] items-center gap-1 pl-[6px]">
          <button type="button" title="Camera" className="flex h-7 w-7 items-center justify-center bg-[#aebfec]">
            <svg viewBox="0 0 24 24" className="h-6 w-6">
              <path d="M2 9L6 8L8 5H15L17 8L22 10V20H2Z" fill="#2b2b2d" stroke="#111" />
              <circle cx="13" cy="14" r="5.500" fill="#555" stroke="#777" />
              <circle cx="13" cy="14" r="3" fill="#222" stroke="#999" strokeWidth=".8" />
              <rect x="9" y="6" width="5" height="2" fill="#555" />
            </svg>
          </button>
          <button type="button" title="Material" className="flex h-7 w-7 items-center justify-center">
            <svg viewBox="0 0 24 24" className="h-6 w-6" stroke="#14266a">
              <circle cx="19" cy="5" r="3.500" fill="#6f93e6" />
              <circle cx="14" cy="10" r="4.500" fill="url(#royal)" />
              <circle cx="8" cy="16" r="6" fill="url(#royal)" />
            </svg>
          </button>
          <button type="button" title="Safe frame" className="ml-px flex h-[22px] w-6 items-center justify-center border border-[#55626b] bg-[#95a0a6]">
            <span className="h-3 w-[14px] border border-[#c0485a] bg-white outline-1 outline-[#e5d6da]" />
          </button>
        </div>
        {SECTIONS.map((section) => (
          <section key={section.title} className="first-of-type:pt-[5px]">
            <h3 className="flex h-[25px] items-center pl-2 text-[13px]">{section.title}</h3>
            <div className="mr-[6px] ml-6 border-t border-[#dcdfe7]">
              {section.rows.map((row, i) => {
                const id = `${section.title}-${i}`;
                return (
                  <div key={id} className="flex h-[21px] border-b border-[#dcdfe7]">
                    <label htmlFor={id} className={`flex w-[131px] shrink-0 items-center border-r border-[#dcdfe7] pl-[3px] ${row.muted ? 'text-[#85878d]' : ''}`}>
                      {row.label}
                    </label>
                    <div className={`flex min-w-0 flex-1 items-center ${row.type === 'check' ? 'pl-[2px]' : ''} ${row.type === 'button' ? 'px-px' : ''}`}>
                      <PropertyValue row={row} id={id} />
                    </div>
                  </div>
                );
              })}
            </div>
          </section>
        ))}
      </div>
    </aside>
  );
}

const windowIcon = (
  <svg viewBox="0 0 24 24" className="h-6 w-6">
    <rect x="1" y="2" width="22" height="20" fill="#e8edf0" />
    <rect x="1" y="2" width="22" height="3" fill="#b8c4cc" />
    <rect x="3" y="7" width="9" height="12" fill="#4b9a8b" />
    <path d="M3 19L12 10V19Z" fill="#2f6f9a" />
    <path d="M14 8H21M14 11H21M14 14H21M14 17H21" stroke="#8b98a2" />
  </svg>
);

const TASKS = [
  {
    name: 'Opera',
    open: true,
    icon: <svg viewBox="0 0 24 24" className="h-6 w-6"><circle cx="12" cy="12" r="11.500" fill="#d81e35" /><path d="M12 1A11 11 0 0 1 12 23" fill="#a80f24" /><ellipse cx="12" cy="12" rx="5" ry="8.500" fill="#231c30" /></svg>,
  },
  {
    name: 'Explorer',
    open: true,
    icon: <svg viewBox="0 0 24 24" className="h-6 w-6"><path d="M1 4H9L11 6H23V21H1Z" fill="#e8a92c" /><path d="M1 8H23V21H1Z" fill="#fbd66b" /><path d="M5 21V13H19V21H15V17H9V21Z" fill="#3f8fd0" /></svg>,
  },
  {
    name: 'Edge',
    icon: (
      <svg viewBox="0 0 24 24" className="h-6 w-6">
        <circle cx="12" cy="12" r="11.500" fill="#1583d6" />
        <path d="M1 10C3 2 13-2 20 4C25 9 24 16 17 16C13 16 14 13 14 12C13 7 5 6 1 10Z" fill="#4fd29a" />
        <path d="M1 10C4 6 11 6 13 10C8 9 6 14 9 18C11 21 16 22 20 20C14 25 3 24 1 15Z" fill="#0f5db0" />
        <path d="M13 10C10 12 11 17 15 18C18 19 21 18 22 17L24 18L24 13C22 17 13 17 14 12Z" fill="#231c30" />
      </svg>
    ),
  },
  {
    name: 'Smile',
    open: true,
    icon: <svg viewBox="0 0 24 24" className="h-6 w-6"><rect width="24" height="24" rx="3" fill="#201c20" /><circle cx="5" cy="5" r="3" fill="#f5b62e" /><rect x="11" y="2" width="10" height="7" fill="#f5b62e" /><path d="M3 12H8C8 17 16 17 16 12H21C21 26 3 26 3 12Z" fill="#f5b62e" /></svg>,
  },
  { name: 'Window 1', open: true, icon: windowIcon },
  {
    name: 'Xr',
    open: true,
    icon: <span className="flex h-6 w-6 items-center justify-center rounded-full border-b-4 border-[#6d6660] bg-[#e0692c] text-[14px] leading-5 font-bold text-white">Xr</span>,
  },
  { name: 'Window 2', open: true, icon: windowIcon },
];

function Taskbar() {
  return (
    <nav className="flex h-10 items-center bg-[#231c30] text-white">
      <button type="button" aria-label="Start" className="flex h-10 w-12 items-center justify-center">
        <svg viewBox="0 0 16 16" className="h-4 w-4" fill="#fff"><path d="M0 2L7 1V7.500H0ZM8 1L16 0V7.500H8ZM0 8.500H7V15L0 14ZM8 8.500H16V16L8 15Z" /></svg>
      </button>
      <div className="flex h-10 w-[344px] items-center gap-[10px] border border-[#4b4a4c] bg-[#333333] pl-3">
        <svg viewBox="0 0 18 18" className="h-[17px] w-[17px]" fill="none" stroke="#fff" strokeWidth="1.300"><circle cx="11" cy="7" r="5.500" /><path d="M7 11L1 17" /></svg>
        <input aria-label="Type here to search" placeholder="Type here to search" className="min-w-0 flex-1 text-[14px] outline-none placeholder:text-[#d5d5d5]" />
      </div>
      <button type="button" aria-label="Task view" className="mr-[2px] flex h-10 w-12 items-center justify-center">
        <svg viewBox="0 0 18 18" className="h-[18px] w-[18px]" fill="none" stroke="#fff"><path d="M1.500 5.500H12.500V12.500H1.500ZM1.500 1V3H12.500V1M1.500 17V15H12.500V17M15.500 1V17M15 7H17V9H15Z" /></svg>
      </button>
      {TASKS.map((task) => (
        <button key={task.name} type="button" title={task.name} className="flex h-10 w-[49px] flex-col items-center justify-between pt-[7px]">
          {task.icon}
          <span className={`h-[2px] w-10 ${task.open ? 'bg-[#b3c6ee]' : ''}`} />
        </button>
      ))}
      <button type="button" title="Rhinoceros 7" className="ml-px flex h-10 w-12 flex-col items-center justify-between border-b-2 border-[#b3c6ee] bg-[#4c4759] pt-[7px]">
        <RhinoMark className="h-6 w-6" />
      </button>
      <div className="ml-auto flex h-10 items-center">
        <svg viewBox="0 0 24 18" className="h-[17px] w-[22px]"><path d="M5 14A5 5 0 0 1 5 5A7 7 0 0 1 17 4A5 5 0 0 1 19 14Z" fill="#cfe8fa" /><path d="M3 12C8 14 16 14 22 11L19 14H5Z" fill="#7ebcf0" /><circle cx="12" cy="15" r="2.500" fill="#3f8fe0" /></svg>
        <span className="ml-[9px] text-[14px]">28°C</span>
        <span className="ml-2 text-[14px]">Hujan ringan</span>
        <ChevronUp className="ml-[14px] h-[17px] w-[17px]" strokeWidth={1.8} />
        <svg viewBox="0 0 14 14" className="ml-[9px] h-[14px] w-[14px]" fill="none" stroke="#fff"><path d="M1 13A12 12 0 0 1 13 1M4 13A9 9 0 0 1 13 4.500M7 13A6 6 0 0 1 13 7.500" /><circle cx="11.500" cy="12" r="1.500" fill="#fff" /></svg>
        <svg viewBox="0 0 18 16" className="ml-[7px] h-4 w-[18px]" fill="none" stroke="#fff"><path d="M1 3L16 1V13H1ZM10 5C7 4 5 6 6 8M6 10C9 11 11 9 10 7M10 3V5.500H8M6 12V9.500H8" /><circle cx="14" cy="12" r="3.500" fill="#e9a01f" stroke="none" /></svg>
        <svg viewBox="0 0 18 14" className="ml-[6px] h-[14px] w-[18px]" fill="none" stroke="#fff"><path d="M6 4H16V11H4M16 6H17.500V9H16M1 2H5V5L3 6.500L1 5ZM2 0V2M4 0V2M3 7V11" /><path d="M7 6H10V9H7Z" fill="#fff" /></svg>
        <svg viewBox="0 0 16 14" className="ml-[6px] h-[14px] w-4" fill="none" stroke="#fff" strokeWidth="1.200"><path d="M1 5H3L7 1V13L3 9H1ZM10 5L14 9M14 5L10 9" /></svg>
        <time className="ml-1 flex w-[68px] flex-col items-center text-[11px] leading-[18px]">
          <span>9:18</span>
          <span>12/02/2022</span>
        </time>
        <button type="button" aria-label="Notifications" className="relative ml-[13px] h-10 w-10">
          <svg viewBox="0 0 18 18" className="absolute top-3 left-0 h-[17px] w-[17px]"><path d="M1 0H17V13H8L4 17V13H1Z" fill="#fff" /><path d="M4 4H14M4 7H14M4 10H10" stroke="#231c30" /></svg>
          <span className="absolute top-[19px] left-[6px] flex h-[17px] w-[17px] items-center justify-center rounded-full border border-[#888] bg-[#333] text-[11px] leading-none">17</span>
          <span className="absolute top-0 right-1 h-10 border-r border-[#5b5667]" />
        </button>
      </div>
    </nav>
  );
}

function App() {
  return (
    <div className="flex min-h-screen flex-col overflow-hidden bg-[#e9ebf0] font-['Open_Sans','Noto_Sans',sans-serif]">
      <svg className="absolute h-0 w-0" aria-hidden="true">
        <defs>
          <radialGradient id="steel" cx=".35" cy=".3"><stop offset="0" stopColor="#fff" /><stop offset="1" stopColor="#666" /></radialGradient>
          <radialGradient id="royal" cx=".35" cy=".3"><stop offset="0" stopColor="#b6cbff" /><stop offset=".35" stopColor="#3560d0" /><stop offset="1" stopColor="#0c2080" /></radialGradient>
          <linearGradient id="swirl" x2="0" y2="1"><stop offset="0" stopColor="#2ba6d8" /><stop offset="1" stopColor="#1557b5" /></linearGradient>
        </defs>
      </svg>
      <TitleBar />
      <nav className="flex h-[21px] items-center gap-[15px] bg-white pt-px pl-[7px] text-[11px] text-black">
        {MENUS.map((menu) => <button key={menu} type="button">{menu}</button>)}
      </nav>
      <CommandArea />
      <PluginBar />
      <TabBar />
      <main className="flex flex-1">
        <div className="w-[65px] shrink-0 pt-[2px] pl-px">
          <div className="mr-[7px] h-[3px] border-y border-[#cfd2dc]" />
          <div className="mt-[2px] grid w-14 grid-cols-2">
            {SIDEBAR.map((item) => <ToolButton key={item} item={item} />)}
          </div>
        </div>
        <div className="flex min-w-0 flex-1 flex-col">
          <Viewport />
          <ViewTabs />
        </div>
        <PropertiesPanel />
      </main>
      <OsnapBar />
      <StatusBar />
      <Taskbar />
    </div>
  );
}

export default App;
